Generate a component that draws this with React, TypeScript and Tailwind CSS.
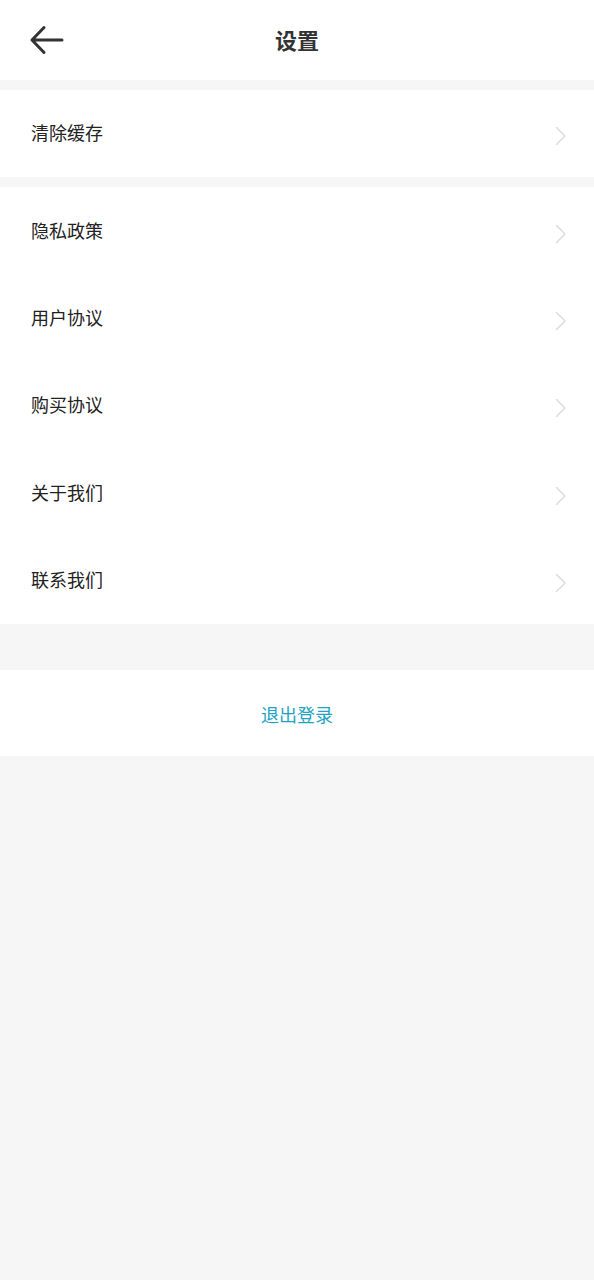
import { ReactNode } from 'react';

const font = { fontFamily: '"Noto Sans CJK SC", "Noto Sans", sans-serif' };

function Chevron() {
  return (
    <svg className="mt-[5px]" width="13" height="20" viewBox="0 0 13 20" fill="none" aria-hidden="true">
      <path d="M2.5 1.5 L11 10 L2.5 18.5" stroke="#dcdcdc" strokeWidth="1.5" strokeLinecap="round" strokeLinejoin="round" />
    </svg>
  );
}

function Row({ children }: { children: ReactNode }) {
  return (
    <div className="flex h-[87.4px] items-center justify-between pl-[31px] pr-[27px]">
      <span className="-mt-[3px] text-[18px] leading-none text-[#222]">{children}</span>
      <Chevron />
    </div>
  );
}

const items = ['隐私政策', '用户协议', '购买协议', '关于我们', '联系我们'];

export default function App() {
  return (
    <div className="min-h-[1280px] bg-[#f6f6f6]" style={font}>
      <header className="relative flex h-[80px] items-center justify-center bg-white">
        <button className="absolute left-[29px] top-[25px]" aria-label="返回">
          <svg width="36" height="30" viewBox="0 0 36 30" fill="none">
            <path d="M15 2.5 L3 15 L15 27.5 M3 15 H33" stroke="#333" strokeWidth="3" strokeLinecap="round" strokeLinejoin="round" />
          </svg>
        </button>
        <h1 className="-mt-[2px] text-[22px] font-bold text-[#333]">设置</h1>
      </header>

      <div className="mt-[10px] bg-white">
        <Row>清除缓存</Row>
      </div>

      <div className="mt-[10px] bg-white">
        {items.map((t) => (
          <Row key={t}>{t}</Row>
        ))}
      </div>

      <div className="mt-[46px] flex h-[86px] items-center justify-center bg-white">
        <span className="mt-[3px] text-[18px] text-[#23a3c3]">退出登录</span>
      </div>
    </div>
  );
}
